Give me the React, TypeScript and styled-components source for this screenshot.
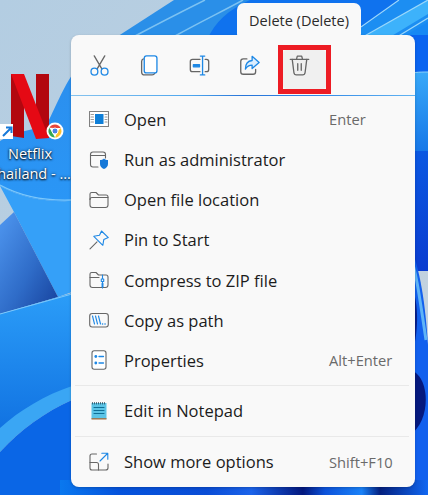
import React from "react";
import styled, { createGlobalStyle } from "styled-components";

const Global = createGlobalStyle`
  html, body { margin: 0; padding: 0; background: #fff; }
  body { font-family: "Open Sans", "Noto Sans", "Liberation Sans", sans-serif; }
`;

const Desktop = styled.div`
  position: relative;
  width: 428px;
  height: 495px;
  overflow: hidden;
  padding: 35px 0 0 71px;
  box-sizing: border-box;
`;

const Wallpaper = styled.svg`
  position: absolute;
  inset: 0;
`;

const ShortcutIcon = styled.div`
  position: absolute;
  left: -30px;
  top: 72px;
  width: 120px;
  display: flex;
  flex-direction: column;
  align-items: center;
`;

const ShortcutGlyph = styled.svg`
  display: block;
  margin-bottom: 4px;
`;

const ShortcutLabel = styled.div`
  color: #fff;
  font-size: 14.5px;
  line-height: 20px;
  text-align: center;
  white-space: nowrap;
  text-shadow: 0 1px 2px #000, 0 0 3px rgba(0, 0, 0, 0.7);
`;

const Tooltip = styled.div`
  position: absolute;
  left: 237px;
  top: 3px;
  width: 124px;
  height: 38px;
  box-sizing: border-box;
  padding-top: 8px;
  border-radius: 7px;
  background: #f9f9f9;
  color: #2b2b2b;
  font-size: 14.5px;
  line-height: 20px;
  text-align: center;
  white-space: nowrap;
  z-index: 2;
`;

const Menu = styled.div`
  position: relative;
  width: 344px;
  height: 452px;
  border-radius: 8px;
  background: #f9f9f9;
  box-shadow: 0 1px 3px rgba(0, 0, 0, 0.2);
  display: flex;
  flex-direction: column;
`;

const Toolbar = styled.div`
  display: flex;
  height: 60px;
  padding: 15px 0 6px 12px;
  box-sizing: border-box;
  gap: 7px;
`;

const ToolButton = styled.div<{ $marked?: boolean }>`
  position: relative;
  width: 43px;
  height: 39px;
  box-sizing: border-box;
  padding: 4.5px 0 0 6px;
  display: flex;
  align-items: flex-start;
  border-radius: 4px;
  background: ${(p) => (p.$marked ? "#f0f0f0" : "transparent")};
  ${(p) =>
    p.$marked &&
    `&::after {
      content: "";
      position: absolute;
      inset: -5px;
      border: 5px solid #ed1c24;
    }`}
`;

const ToolbarRule = styled.div`
  height: 1px;
  flex: none;
  background: linear-gradient(90deg, #86c3ee 0%, #4ea6ee 35%, #2a75d8 50%, #2e86e6 70%, #62b4f2 100%);
`;

const List = styled.div`
  display: flex;
  flex-direction: column;
  padding-top: 4px;
`;

const Row = styled.div<{ $h?: number }>`
  height: ${(p) => p.$h ?? 40.2}px;
  box-sizing: border-box;
  display: flex;
  align-items: center;
  padding: 0 0 1.5px 18px;
  color: #1c1c1c;
  font-size: 16.5px;
  flex: none;
`;

const RowIcon = styled.span`
  width: 20px;
  height: 20px;
  flex: none;
  margin-right: 15px;
  display: flex;
`;

const RowLabel = styled.span`
  flex: 1;
  white-space: nowrap;
`;

const Shortcut = styled.span`
  width: 86px;
  flex: none;
  color: #6a6a6a;
  font-size: 14.7px;
  white-space: nowrap;
`;

const Separator = styled.div<{ $top?: number }>`
  height: 1px;
  margin: ${(p) => p.$top ?? 0}px 6px 0 4px;
  background: #e9e9e9;
  flex: none;
`;

const G = "#666666";
const B = "#1e88e5";

const Ico = ({ children }: { children: React.ReactNode }) => (
  <svg width={21} height={21} viewBox="0 0 24 24" fill="none" strokeWidth={1.5} strokeLinecap="round" strokeLinejoin="round">
    {children}
  </svg>
);

const icons: Record<string, React.ReactNode> = {
  cut: (
    <Ico>
      <path d="M6 1 L14.5 15.5 M18 1 L9.5 15.5" stroke={G} />
      <circle cx="6.2" cy="19" r="3.9" stroke={B} />
      <circle cx="17.8" cy="19" r="3.9" stroke={B} />
    </Ico>
  ),
  copy: (
    <Ico>
      <path d="M5 4.5 C3.6 5 3 6 3 7.5 V19 C3 21 4.2 22.8 6.5 22.8 H15 C16.5 22.8 17.5 22 18 20.8" stroke={G} />
      <rect x="6" y="1" width="14.5" height="19.5" rx="2.6" stroke={B} fill="#fff" />
    </Ico>
  ),
  rename: (
    <Ico>
      <path d="M12.5 5 H4 C2.5 5 1.5 6 1.5 7.5 V16.5 C1.5 18 2.5 19 4 19 H12.5 M18.5 5 H20 C21.5 5 22.5 6 22.5 7.5 V16.5 C22.5 18 21.5 19 20 19 H18.5" stroke={G} />
      <path d="M5 11 H12 V13.5 H5 Z" fill={B} stroke={B} />
      <path d="M15.5 2 V22 M13 1.2 H18 M13 22.8 H18" stroke={B} />
    </Ico>
  ),
  share: (
    <Ico>
      <path d="M9 4.5 H5 C3 4.5 2 5.8 2 7.5 V19 C2 21 3.2 22 5 22 H16 C18 22 19 20.8 19 19 V16.5" stroke={G} />
      <path d="M15 1.5 L23 8.5 L15 15.5 V11.6 C11.5 11.6 9 13.2 7.3 16.2 C7.3 11 10 6.8 15 6.3 Z" stroke={B} fill="#dbeeff" />
    </Ico>
  ),
  trash: (
    <Ico>
      <path d="M1.5 5 H22.5 M8.5 5 L9.5 1.3 H14.5 L15.5 5" stroke={G} />
      <path d="M3.7 5 L5.6 20 C5.8 21.7 6.9 22.8 8.5 22.8 H15.5 C17.1 22.8 18.2 21.7 18.4 20 L20.3 5" stroke={G} />
      <path d="M10 10 V17.5 M14 10 V17.5" stroke={G} />
    </Ico>
  ),
};

const rowIco = (c: React.ReactNode) => (
  <svg width="20" height="20" viewBox="0 0 20 20" fill="none" strokeWidth={1.1} strokeLinecap="round" strokeLinejoin="round">
    {c}
  </svg>
);

const open = rowIco(
  <>
    <rect x="0.5" y="2.5" width="19" height="15" fill="#fff" stroke="#808080" />
    <rect x="6" y="5" width="8.5" height="10" fill="#0f7fd8" />
    <path d="M2 5.5H4.5M2 8H4.5M2 10.5H4.5M2 13H4.5M16 5.5H18M16 8H18M16 10.5H18M16 13H18" stroke="#9a9a9a" />
  </>
);
const admin = rowIco(
  <>
    <path d="M9 17 H4 C2.6 17 1.5 16 1.5 14.5 V4.5 C1.5 3 2.6 2 4 2 H14 C15.5 2 16.5 3 16.5 4.5 V8" stroke={G} />
    <path d="M1.5 5.5 H16" stroke={G} />
    <path d="M15 8.5 C16.3 9.6 17.5 10 19 10 V14 C19 16.5 17.3 18 15 19 C12.7 18 11 16.5 11 14 V10 C12.5 10 13.7 9.6 15 8.5 Z" fill="#1578d8" />
  </>
);
const folder = rowIco(
  <>
    <path d="M1 15 V4 C1 3 1.8 2.5 2.7 2.5 H7 L9.5 5 H17 C18.2 5 19 5.8 19 7 V15 C19 16.5 18 17.5 16.5 17.5 H3.5 C2 17.5 1 16.5 1 15 Z" stroke={G} />
    <path d="M1 9.5 C1 8.2 2 7.5 3 7.5 H19" stroke={G} />
  </>
);
const pin = rowIco(
  <>
    <path d="M12.5 1 L19.3 7.6 L14.8 9.6 L13.8 15.3 L4.8 6.3 L10.5 5.3 Z" stroke="#1e88e5" />
    <path d="M8 11.8 L1 18.8" stroke={G} />
  </>
);
const zip = rowIco(
  <>
    <path d="M1 15 V4 C1 3 1.8 2.5 2.7 2.5 H7 L9.5 5 H17 C18.2 5 19 5.8 19 7 V15 C19 16.5 18 17.5 16.5 17.5 H3.5 C2 17.5 1 16.5 1 15 Z" stroke={G} />
    <path d="M1 7.5 H10" stroke={G} />
    <path d="M13.5 5 V8 M13.5 12 V18 M12.3 9 H14.7 V11.5 H12.3 Z M12.5 14 H14.5 M12.5 16 H14.5" stroke="#1e88e5" />
  </>
);
const path = rowIco(
  <>
    <rect x="0.7" y="3.5" width="18.6" height="13.5" rx="2.5" stroke={G} />
    <path d="M3.5 6 L5.5 14 M6.5 6 L8.5 14 M9.5 6 L11.5 14" stroke="#1e88e5" />
    <path d="M13.5 14H13.6M16 14H16.1" stroke="#1e88e5" strokeWidth={1.5} />
  </>
);
const props = rowIco(
  <>
    <rect x="3" y="0.8" width="14" height="18.4" rx="2.2" fill="#fff" stroke={G} />
    <circle cx="6.8" cy="6.5" r="1.4" fill="#1e88e5" />
    <circle cx="6.8" cy="13" r="1.4" fill="#1e88e5" />
    <path d="M10 6.5H14.5M10 13H14.5" stroke="#1e88e5" strokeWidth={1.3} />
  </>
);
const notepad = rowIco(
  <>
    <path d="M2.5 2 H17.5 V18 H2.5 Z" fill="#5bc4e6" />
    <rect x="2.5" y="17.2" width="15" height="1.3" fill="#a46a3a" />
    <path d="M3.5 1.5V3M5.5 1.5V3M7.5 1.5V3M9.5 1.5V3M11.5 1.5V3M13.5 1.5V3M15.5 1.5V3" stroke="#2b4a5a" strokeWidth={0.8} />
    <path d="M5 6.5H15M5 9.5H15M5 12.5H15" stroke="#0f6f96" strokeWidth={1.1} />
  </>
);
const more = rowIco(
  <>
    <path d="M7.5 2 H3 C1.8 2 1 2.8 1 4 V16 C1 17.3 1.8 18 3 18 H16.5 C18 18 19 17.2 19 16 V12" stroke={G} />
    <path d="M1 10.5 H7.5 C8.7 10.5 9.5 11.3 9.5 12.5 V18" stroke={G} />
    <path d="M11 9 L18.5 1.5 M12.8 1.2 H18.8 V7.2" stroke="#1e88e5" />
  </>
);

const topRows = [
  { i: open, l: "Open", s: "Enter" },
  { i: admin, l: "Run as administrator" },
  { i: folder, l: "Open file location" },
  { i: pin, l: "Pin to Start" },
  { i: zip, l: "Compress to ZIP file" },
  { i: path, l: "Copy as path" },
  { i: props, l: "Properties", s: "Alt+Enter" },
];

export default function App() {
  return (
    <>
      <Global />
      <Desktop>
        <Wallpaper width="428" height="495" viewBox="0 0 428 495">
          <defs>
            <linearGradient id="sky" x1="0" y1="0" x2="1" y2="1">
              <stop offset="0" stopColor="#b3cde2" />
              <stop offset="1" stopColor="#c6d3de" />
            </linearGradient>
            <linearGradient id="petal" x1="0" y1="0" x2="0" y2="1">
              <stop offset="0" stopColor="#2b8fee" />
              <stop offset="1" stopColor="#2a96f6" />
            </linearGradient>
            <linearGradient id="dark" x1="0" y1="0" x2="1" y2="1">
              <stop offset="0" stopColor="#4f97f0" />
              <stop offset="0.55" stopColor="#2f6cc8" />
              <stop offset="1" stopColor="#153f9a" />
            </linearGradient>
            <linearGradient id="low" x1="0" y1="0" x2="0" y2="1">
              <stop offset="0" stopColor="#2b9df8" />
              <stop offset="1" stopColor="#0f6fe0" />
            </linearGradient>
            <linearGradient id="floor" x1="0" y1="0" x2="1" y2="0">
              <stop offset="0" stopColor="#0a78ef" />
              <stop offset="0.16" stopColor="#0553dc" />
              <stop offset="0.4" stopColor="#0a4dd6" />
              <stop offset="0.52" stopColor="#1b63ea" />
              <stop offset="0.66" stopColor="#03187e" />
              <stop offset="0.72" stopColor="#0c52da" />
              <stop offset="0.82" stopColor="#1a82f8" />
              <stop offset="0.87" stopColor="#04207f" />
              <stop offset="1" stopColor="#1067f2" />
            </linearGradient>
            <linearGradient id="rightMid" x1="0" y1="0" x2="0" y2="1">
              <stop offset="0" stopColor="#38a8f8" />
              <stop offset="1" stopColor="#1677e8" />
            </linearGradient>
            <linearGradient id="rightLow" x1="0" y1="0" x2="0" y2="1">
              <stop offset="0" stopColor="#0b58e2" />
              <stop offset="1" stopColor="#0a3cd0" />
            </linearGradient>
          </defs>
          <rect width="428" height="495" fill="url(#sky)" />
          <path d="M112 40 L174 0 H428 V40 H112 Z" fill="#2a8fe8" />
          <path d="M135 36 C165 20 185 10 205 0" stroke="#7cc2f2" strokeWidth="1.5" fill="none" />
          <path d="M175 36 C200 22 225 10 243 0" stroke="#7cc2f2" strokeWidth="1.5" fill="none" />
          <path d="M207 40 C215 22 228 10 250 0 H400 V40 Z" fill="#0f72ee" />
          <path d="M361 28 L400 0 H428 V40 H361 Z" fill="#1c8ef2" />
          <path d="M361 38 L428 0 V14 L385 40 Z" fill="#3db2fb" />
          <path d="M361 27 L399 0" stroke="#9bd8fb" strokeWidth="1.2" fill="none" />
          <path d="M361 38 L428 0" stroke="#9bd8fb" strokeWidth="1.2" fill="none" />
          <path d="M392 40 L428 18" stroke="#9bd8fb" strokeWidth="1.2" fill="none" />
          <rect x="410" y="35" width="18" height="38" fill="#0a64f0" />
          <path d="M398 40 L428 22 V35 H400 Z" fill="#1688f4" />
          <rect x="410" y="72" width="18" height="80" fill="url(#rightMid)" />
          <path d="M415 72.5 C420 72 424 72 428 72" stroke="#8bd0fa" strokeWidth="1" fill="none" />
          <rect x="410" y="151" width="18" height="120" fill="url(#rightLow)" />
          <path d="M410 245 C420 270 425 300 428 345 V495 H410 Z" fill="#1260ee" />
          <path d="M410 255 C416 270 420 300 426 340" stroke="#5fb4f6" strokeWidth="3" fill="none" />
          <path d="M410 280 C418 300 420 325 412 355 L410 355 Z" fill="#061f8c" />
          <path d="M410 370 C430 375 432 420 410 435 Z" fill="#05197e" />
          <path d="M72 75 C62 90 52 115 46 126 L12 134 L0 141 V186 C22 198 45 202 72 201 Z" fill="url(#petal)" />
          <path d="M0 186 C22 198 45 202 72 201 V292 L58 297 L14 212 Z" fill="#35a0f8" />
          <path d="M0 185 C22 197 45 201 72 200" stroke="#7cc8fb" strokeWidth="1.4" fill="none" />
          <path d="M14 212 L58 297 L0 314 V225 Z" fill="url(#dark)" />
          <path d="M0 314 L72 293 V390 C40 405 15 420 0 440 Z" fill="url(#low)" />
          <path d="M0 314 L72 294" stroke="#7cc8fb" strokeWidth="1" fill="none" />
          <path d="M0 428 C20 410 45 395 72 386 V400 C45 412 20 430 0 452 Z" fill="#3aa6f4" />
          <path d="M0 452 C20 430 45 412 72 400 V495 H0 Z" fill="#0a66e6" />
          <rect x="60" y="480" width="368" height="15" fill="url(#floor)" />
        </Wallpaper>

        <ShortcutIcon>
          <ShortcutGlyph width="120" height="68" viewBox="0 0 120 68">
            <path d="M41 2 H54 V66 L41 64 Z" fill="#b2070f" />
            <path d="M66 2 H79 V66 L66 64 Z" fill="#b2070f" />
            <path d="M41 2 H54 L79 66 L66 67 Z" fill="#e50914" />
            <rect x="30" y="52" width="13" height="15" fill="#fff" />
            <path d="M33 64 L41 56 M36 55.5 H41.5 V61" stroke="#1678d8" strokeWidth="2" fill="none" />
            <circle cx="85" cy="59" r="8.5" fill="#fff" />
            <path d="M85 52.5 A6.5 6.5 0 0 1 90.7 56 L85 56 Z" fill="#e8453c" />
            <path d="M79.4 55.7 A6.5 6.5 0 0 1 85 52.5 V56 Z" fill="#e8453c" />
            <path d="M79.4 55.7 L82.5 61 L85 65.5 A6.5 6.5 0 0 1 79.4 55.7 Z" fill="#34a853" />
            <path d="M90.7 56 A6.5 6.5 0 0 1 85 65.5 L88 59 Z" fill="#fbc02d" />
            <circle cx="85" cy="59" r="3" fill="#4a84e8" stroke="#fff" strokeWidth="1" />
          </ShortcutGlyph>
          <ShortcutLabel>Netflix</ShortcutLabel>
          <ShortcutLabel>Thailand - ...</ShortcutLabel>
        </ShortcutIcon>

        <Tooltip>Delete (Delete)</Tooltip>

        <Menu>
          <Toolbar>
            <ToolButton>{icons.cut}</ToolButton>
            <ToolButton>{icons.copy}</ToolButton>
            <ToolButton>{icons.rename}</ToolButton>
            <ToolButton>{icons.share}</ToolButton>
            <ToolButton $marked>{icons.trash}</ToolButton>
          </Toolbar>
          <ToolbarRule />
          <List>
            {topRows.map((r) => (
              <Row key={r.l}>
                <RowIcon>{r.i}</RowIcon>
                <RowLabel>{r.l}</RowLabel>
                {r.s && <Shortcut>{r.s}</Shortcut>}
              </Row>
            ))}
            <Separator $top={4} />
            <Row $h={50}>
              <RowIcon>{notepad}</RowIcon>
              <RowLabel>Edit in Notepad</RowLabel>
            </Row>
            <Separator />
            <Row $h={50}>
              <RowIcon>{more}</RowIcon>
              <RowLabel>Show more options</RowLabel>
              <Shortcut>Shift+F10</Shortcut>
            </Row>
          </List>
        </Menu>
      </Desktop>
    </>
  );
}
